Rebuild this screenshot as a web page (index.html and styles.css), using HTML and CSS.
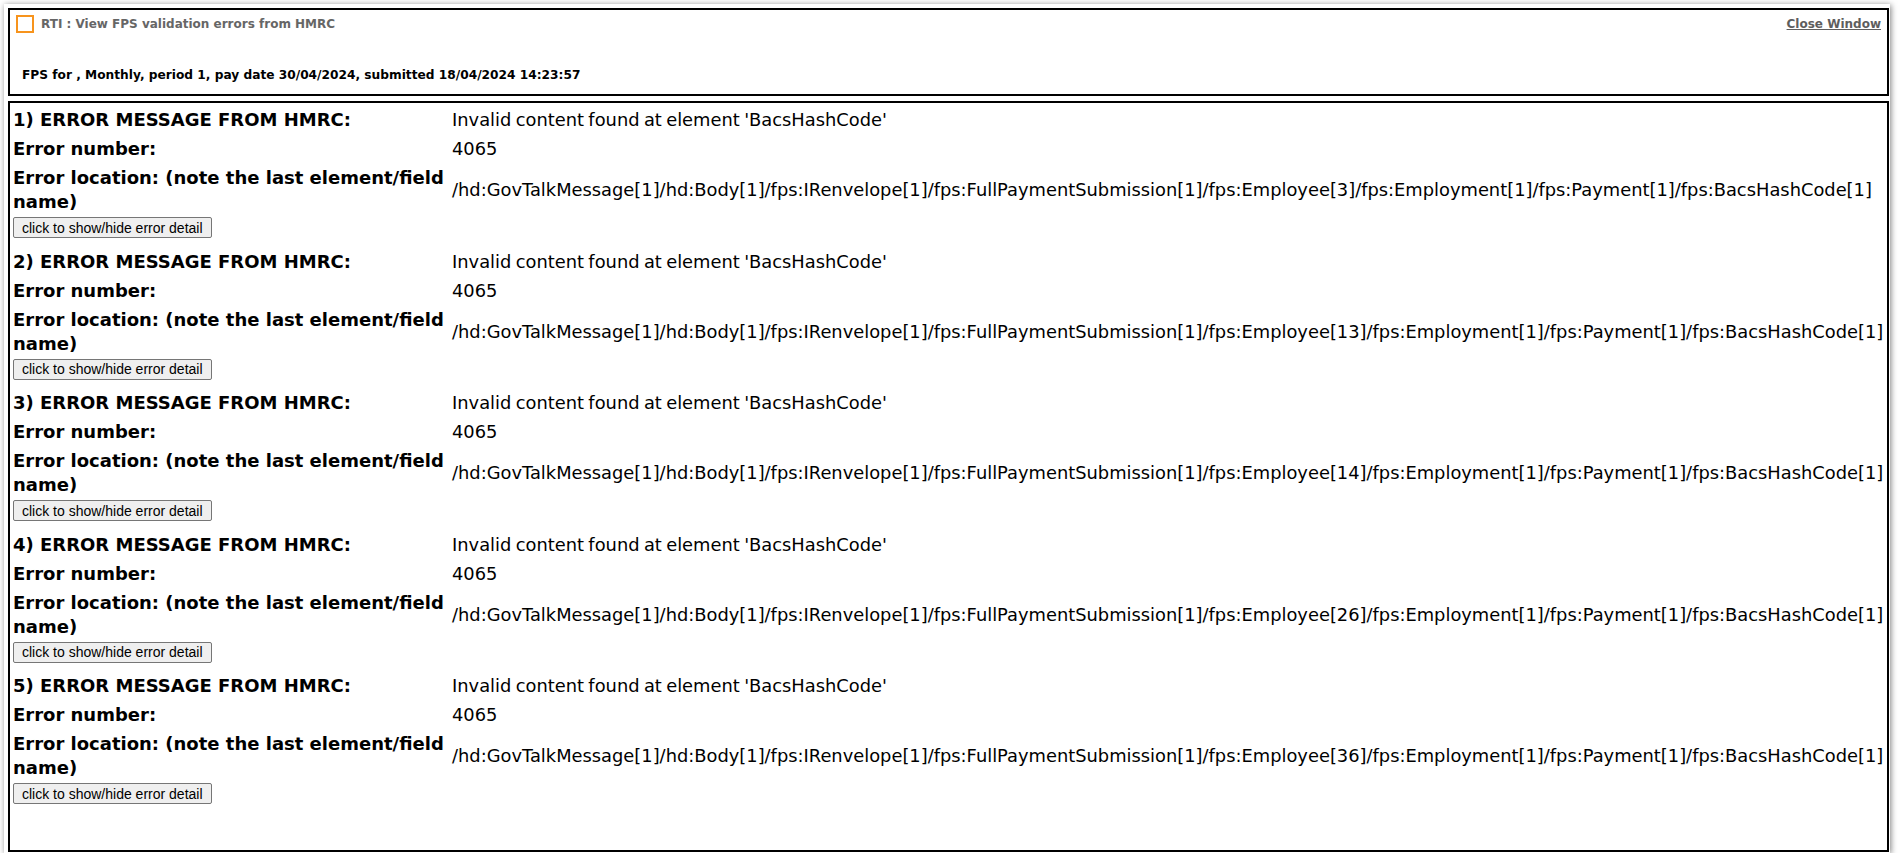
FILE: index.html
```html
<!DOCTYPE html>
<html lang="en">
<head>
<meta charset="utf-8">
<title>RTI : View FPS validation errors from HMRC</title>
<link rel="stylesheet" href="styles.css">
</head>
<body>
<div class="win">
  <div class="hdr">
    <div class="hdr-top">
      <span class="ico"></span>
      <span class="title">RTI : View FPS validation errors from HMRC</span>
      <a class="close" href="#">Close Window</a>
    </div>
    <div class="sub">FPS for , Monthly, period 1, pay date 30/04/2024, submitted 18/04/2024 14:23:57</div>
  </div>
  <div class="panel">
    <table class="errs">
      <tbody>
        <tr><td class="lbl">1) ERROR MESSAGE FROM HMRC:</td><td class="val">Invalid content found at element 'BacsHashCode'</td></tr>
        <tr><td class="lbl">Error number:</td><td class="val">4065</td></tr>
        <tr><td class="lbl">Error location: (note the last element/field name)</td><td class="val">/hd:GovTalkMessage[1]/hd:Body[1]/fps:IRenvelope[1]/fps:FullPaymentSubmission[1]/fps:Employee[3]/fps:Employment[1]/fps:Payment[1]/fps:BacsHashCode[1]</td></tr>
        <tr><td class="btn-cell" colspan="2"><button class="btn" type="button">click to show/hide error detail</button></td></tr>

        <tr><td class="lbl">2) ERROR MESSAGE FROM HMRC:</td><td class="val">Invalid content found at element 'BacsHashCode'</td></tr>
        <tr><td class="lbl">Error number:</td><td class="val">4065</td></tr>
        <tr><td class="lbl">Error location: (note the last element/field name)</td><td class="val">/hd:GovTalkMessage[1]/hd:Body[1]/fps:IRenvelope[1]/fps:FullPaymentSubmission[1]/fps:Employee[13]/fps:Employment[1]/fps:Payment[1]/fps:BacsHashCode[1]</td></tr>
        <tr><td class="btn-cell" colspan="2"><button class="btn" type="button">click to show/hide error detail</button></td></tr>

        <tr><td class="lbl">3) ERROR MESSAGE FROM HMRC:</td><td class="val">Invalid content found at element 'BacsHashCode'</td></tr>
        <tr><td class="lbl">Error number:</td><td class="val">4065</td></tr>
        <tr><td class="lbl">Error location: (note the last element/field name)</td><td class="val">/hd:GovTalkMessage[1]/hd:Body[1]/fps:IRenvelope[1]/fps:FullPaymentSubmission[1]/fps:Employee[14]/fps:Employment[1]/fps:Payment[1]/fps:BacsHashCode[1]</td></tr>
        <tr><td class="btn-cell" colspan="2"><button class="btn" type="button">click to show/hide error detail</button></td></tr>

        <tr><td class="lbl">4) ERROR MESSAGE FROM HMRC:</td><td class="val">Invalid content found at element 'BacsHashCode'</td></tr>
        <tr><td class="lbl">Error number:</td><td class="val">4065</td></tr>
        <tr><td class="lbl">Error location: (note the last element/field name)</td><td class="val">/hd:GovTalkMessage[1]/hd:Body[1]/fps:IRenvelope[1]/fps:FullPaymentSubmission[1]/fps:Employee[26]/fps:Employment[1]/fps:Payment[1]/fps:BacsHashCode[1]</td></tr>
        <tr><td class="btn-cell" colspan="2"><button class="btn" type="button">click to show/hide error detail</button></td></tr>

        <tr><td class="lbl">5) ERROR MESSAGE FROM HMRC:</td><td class="val">Invalid content found at element 'BacsHashCode'</td></tr>
        <tr><td class="lbl">Error number:</td><td class="val">4065</td></tr>
        <tr><td class="lbl">Error location: (note the last element/field name)</td><td class="val">/hd:GovTalkMessage[1]/hd:Body[1]/fps:IRenvelope[1]/fps:FullPaymentSubmission[1]/fps:Employee[36]/fps:Employment[1]/fps:Payment[1]/fps:BacsHashCode[1]</td></tr>
        <tr><td class="btn-cell" colspan="2"><button class="btn" type="button">click to show/hide error detail</button></td></tr>
      </tbody>
    </table>
  </div>
</div>
</body>
</html>
```

FILE: styles.css
```css
html, body {
  margin: 0;
  padding: 0;
  background: #fff;
}

body {
  font-family: "DejaVu Sans", Verdana, sans-serif;
  color: #000;
}

.win {
  margin: 4px 11px 0 4px;
  padding: 4px 1px 1px 4px;
  background: #fff;
  box-shadow: 1px 1px 6px rgba(0, 0, 0, 0.5);
}

.hdr {
  height: 88px;
  box-sizing: border-box;
  border: 2px solid #000;
  padding: 5px 6px 0 6px;
}

.hdr-top {
  display: flex;
  align-items: center;
  height: 18px;
}

.ico {
  width: 18px;
  height: 18px;
  box-sizing: border-box;
  border: 2px solid #f7941d;
  margin-right: 7px;
  flex: none;
}

.title {
  font-size: 12px;
  font-weight: bold;
  color: #666;
}

.close {
  margin-left: auto;
  font-size: 12px;
  font-weight: bold;
  color: #5e5e5e;
  text-decoration: underline;
}

.sub {
  margin: 35px 0 0 6px;
  font-size: 12.2px;
  line-height: 15px;
  font-weight: bold;
  color: #000;
}

.panel {
  margin-top: 5px;
  height: 751px;
  box-sizing: border-box;
  border: 2px solid #000;
  padding-top: 2px;
}

.errs {
  border-collapse: collapse;
  border-spacing: 0;
}

.errs td {
  padding: 3px 3px 2px 3px;
  line-height: 24px;
  vertical-align: middle;
}

.errs td.lbl {
  width: 436px;
  padding-right: 0;
  font-size: 18px;
  font-weight: bold;
}

.val {
  font-size: 17.85px;
  word-spacing: -1.3px;
  white-space: nowrap;
}

.errs td.btn-cell {
  padding: 1px 3px 8.55px 3px;
}

.btn {
  display: block;
  height: 21px;
  box-sizing: border-box;
  padding: 0 8px;
  margin: 0;
  font-family: "Liberation Sans", Arial, sans-serif;
  font-size: 14px;
  color: #000;
  background: #efefef;
  border: 1px solid #767676;
  border-radius: 2px;
}
```
